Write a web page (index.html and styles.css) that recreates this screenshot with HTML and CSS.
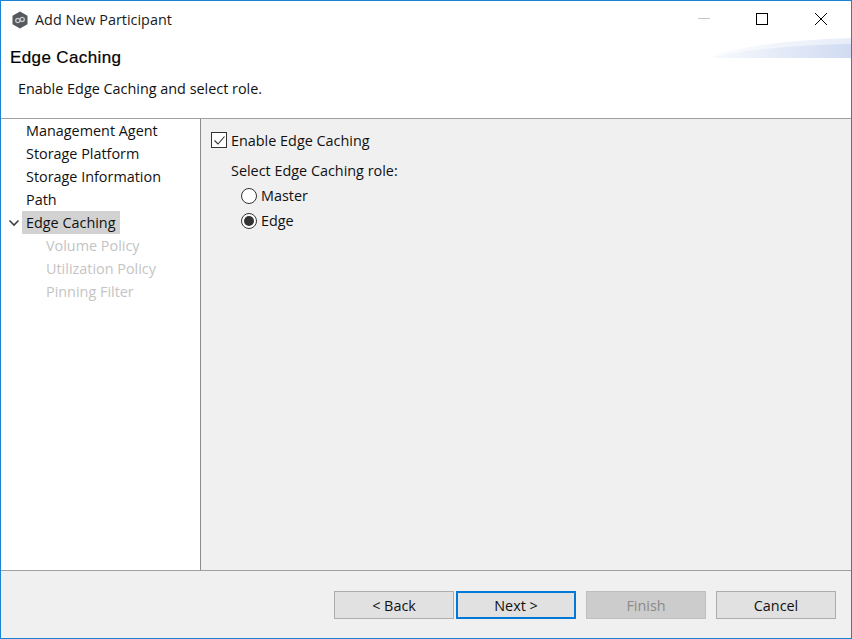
FILE: index.html
```html
<!DOCTYPE html>
<html lang="en">
<head>
<meta charset="utf-8">
<title>Add New Participant</title>
<link rel="stylesheet" href="styles.css">
</head>
<body>
<div class="window">
  <div class="titlebar">
    <svg class="app-icon" width="18" height="18" viewBox="0 0 18 18">
      <path d="M9 .5 16.500 4.700V13.300L9 17.500 1.500 13.300V4.700Z" fill="#555a5e"/>
      <circle cx="6.800" cy="9.600" r="2.100" fill="none" stroke="#c4c6c8" stroke-width="1.300"/>
      <circle cx="11.200" cy="8.400" r="2.100" fill="none" stroke="#c4c6c8" stroke-width="1.300"/>
    </svg>
    <span class="title">Add New Participant</span>
    <div class="controls">
      <svg class="ctl" width="58" height="37" viewBox="0 0 58 37"><path d="M22 17.500H34" stroke="#c8c8c8" stroke-width="1"/></svg>
      <svg class="ctl" width="58" height="37" viewBox="0 0 58 37"><rect x="22.500" y="12.500" width="11" height="11" fill="none" stroke="#000" stroke-width="1"/></svg>
      <svg class="ctl" width="58" height="37" viewBox="0 0 58 37"><path d="M23 12 35 24M35 12 23 24" stroke="#000" stroke-width="1"/></svg>
    </div>
  </div>
  <div class="banner">
    <svg class="swoosh" width="141" height="20" viewBox="0 0 141 20">
      <defs>
        <linearGradient id="sw" x1="0" x2="1" y1="0" y2="0">
          <stop offset="0" stop-color="#f8fafd"/>
          <stop offset="1" stop-color="#d0dbf2"/>
        </linearGradient>
        <linearGradient id="sw2" x1="0" x2="1" y1="0" y2="0">
          <stop offset="0" stop-color="#fcfdfe"/>
          <stop offset="1" stop-color="#e6ecf8"/>
        </linearGradient>
      </defs>
      <path d="M0 20C20 9 80 2 141 0V20Z" fill="url(#sw2)"/>
      <path d="M0 20C30 12 85 7 141 6V20Z" fill="url(#sw)"/>
    </svg>
    <h1 class="banner-title">Edge Caching</h1>
    <p class="banner-text">Enable Edge Caching and select role.</p>
  </div>
  <div class="body">
    <nav class="tree">
      <div class="tree-row"><span class="tree-label">Management Agent</span></div>
      <div class="tree-row"><span class="tree-label">Storage Platform</span></div>
      <div class="tree-row"><span class="tree-label">Storage Information</span></div>
      <div class="tree-row"><span class="tree-label">Path</span></div>
      <div class="tree-row">
        <svg class="chevron" width="12" height="8" viewBox="0 0 12 8"><path d="M1.500 1.500 6 6 10.500 1.500" fill="none" stroke="#404040" stroke-width="1.600"/></svg>
        <span class="tree-label selected">Edge Caching</span>
      </div>
      <div class="tree-row child"><span class="tree-label">Volume Policy</span></div>
      <div class="tree-row child"><span class="tree-label">Utilization Policy</span></div>
      <div class="tree-row child"><span class="tree-label">Pinning Filter</span></div>
    </nav>
    <main class="content">
      <div class="check-row">
        <span class="checkbox">
          <svg width="13" height="13" viewBox="0 0 13 13"><path d="M1.500 6.500 5 10 11.500 2.500" fill="none" stroke="#333" stroke-width="1.100"/></svg>
        </span>
        <span>Enable Edge Caching</span>
      </div>
      <div class="role-group">
        <div class="role-label">Select Edge Caching role:</div>
        <div class="radio-row"><span class="radio"></span><span>Master</span></div>
        <div class="radio-row"><span class="radio on"></span><span>Edge</span></div>
      </div>
    </main>
  </div>
  <footer class="footer">
    <button class="btn">&lt; Back</button>
    <button class="btn primary">Next &gt;</button>
    <button class="btn disabled">Finish</button>
    <button class="btn cancel">Cancel</button>
  </footer>
</div>
</body>
</html>
```
FILE: styles.css
```css
* { box-sizing: border-box; }
html, body { margin: 0; padding: 0; }
body {
  width: 852px;
  height: 639px;
  overflow: hidden;
  font-family: "Open Sans", "Noto Sans", sans-serif;
  font-size: 14.4px;
  color: #111;
}
.window {
  width: 852px;
  height: 639px;
  border: 1px solid #1883d7;
  display: flex;
  flex-direction: column;
  background: #fff;
}
.titlebar {
  height: 37px;
  flex: none;
  display: flex;
  align-items: center;
  padding-left: 10px;
}
.app-icon { flex: none; }
.title { margin-left: 6px; color: #1a1a1a; }
.controls { margin-left: auto; margin-right: 1px; display: flex; }
.ctl { display: block; }
.banner {
  position: relative;
  height: 81px;
  flex: none;
  border-bottom: 1px solid #a0a0a0;
  padding: 9px 0 0 9px;
}
.swoosh { position: absolute; right: 0; top: 0; }
.banner-title {
  margin: 0;
  font-family: "Liberation Sans", Arial, sans-serif;
  font-size: 17px;
  letter-spacing: 0.38px;
  font-weight: 400;
  line-height: 22px;
  color: #000;
  -webkit-text-stroke: 0.2px #000;
}
.banner-text { margin: 10px 0 0 8px; line-height: 20px; }
.body { flex: 1; display: flex; min-height: 0; }
.tree {
  width: 200px;
  flex: none;
  border-right: 1px solid #8c8c8c;
  background: #fff;
}
.tree-row {
  position: relative;
  height: 23px;
  display: flex;
  align-items: center;
  padding-left: 21px;
}
.tree-label { padding: 0 4px; line-height: 23px; white-space: nowrap; }
.tree-label.selected { background: #d2d2d2; }
.child { padding-left: 41px; }
.child .tree-label { color: #c4c4c4; }
.chevron { position: absolute; left: 6.500px; top: 8px; }
.content {
  flex: 1;
  background: #f0f0f0;
  padding: 11px 0 0 10px;
}
.check-row { display: flex; align-items: center; height: 20px; gap: 4px; }
.checkbox {
  width: 16px;
  height: 16px;
  border: 1px solid #333;
  background: #fff;
  display: flex;
  align-items: center;
  justify-content: center;
}
.role-group { margin: 11px 0 0 20px; }
.role-label { height: 20px; line-height: 20px; }
.radio-row {
  display: flex;
  align-items: center;
  gap: 4px;
  height: 25px;
  padding-left: 10px;
}
.role-label + .radio-row { margin-top: 2px; }
.radio {
  width: 16px;
  height: 16px;
  border: 1px solid #333;
  border-radius: 50%;
  background: #fff;
  position: relative;
}
.radio.on::after {
  content: "";
  position: absolute;
  left: 2px;
  top: 2px;
  width: 10px;
  height: 10px;
  border-radius: 50%;
  background: #333;
}
.footer {
  height: 68px;
  flex: none;
  background: #f0f0f0;
  border-top: 1px solid #a0a0a0;
  display: flex;
  justify-content: flex-end;
  gap: 10px;
  padding: 20px 15px 0 0;
}
.btn {
  width: 120px;
  height: 28px;
  border: 1px solid #adadad;
  background: #e1e1e1;
  font: inherit;
  color: #111;
  padding: 0;
}
.btn.primary { border: 2px solid #0078d7; margin-left: -8px; }
.btn.disabled { background: #cccccc; border-color: #bfbfbf; color: #8a8a8a; }
```
